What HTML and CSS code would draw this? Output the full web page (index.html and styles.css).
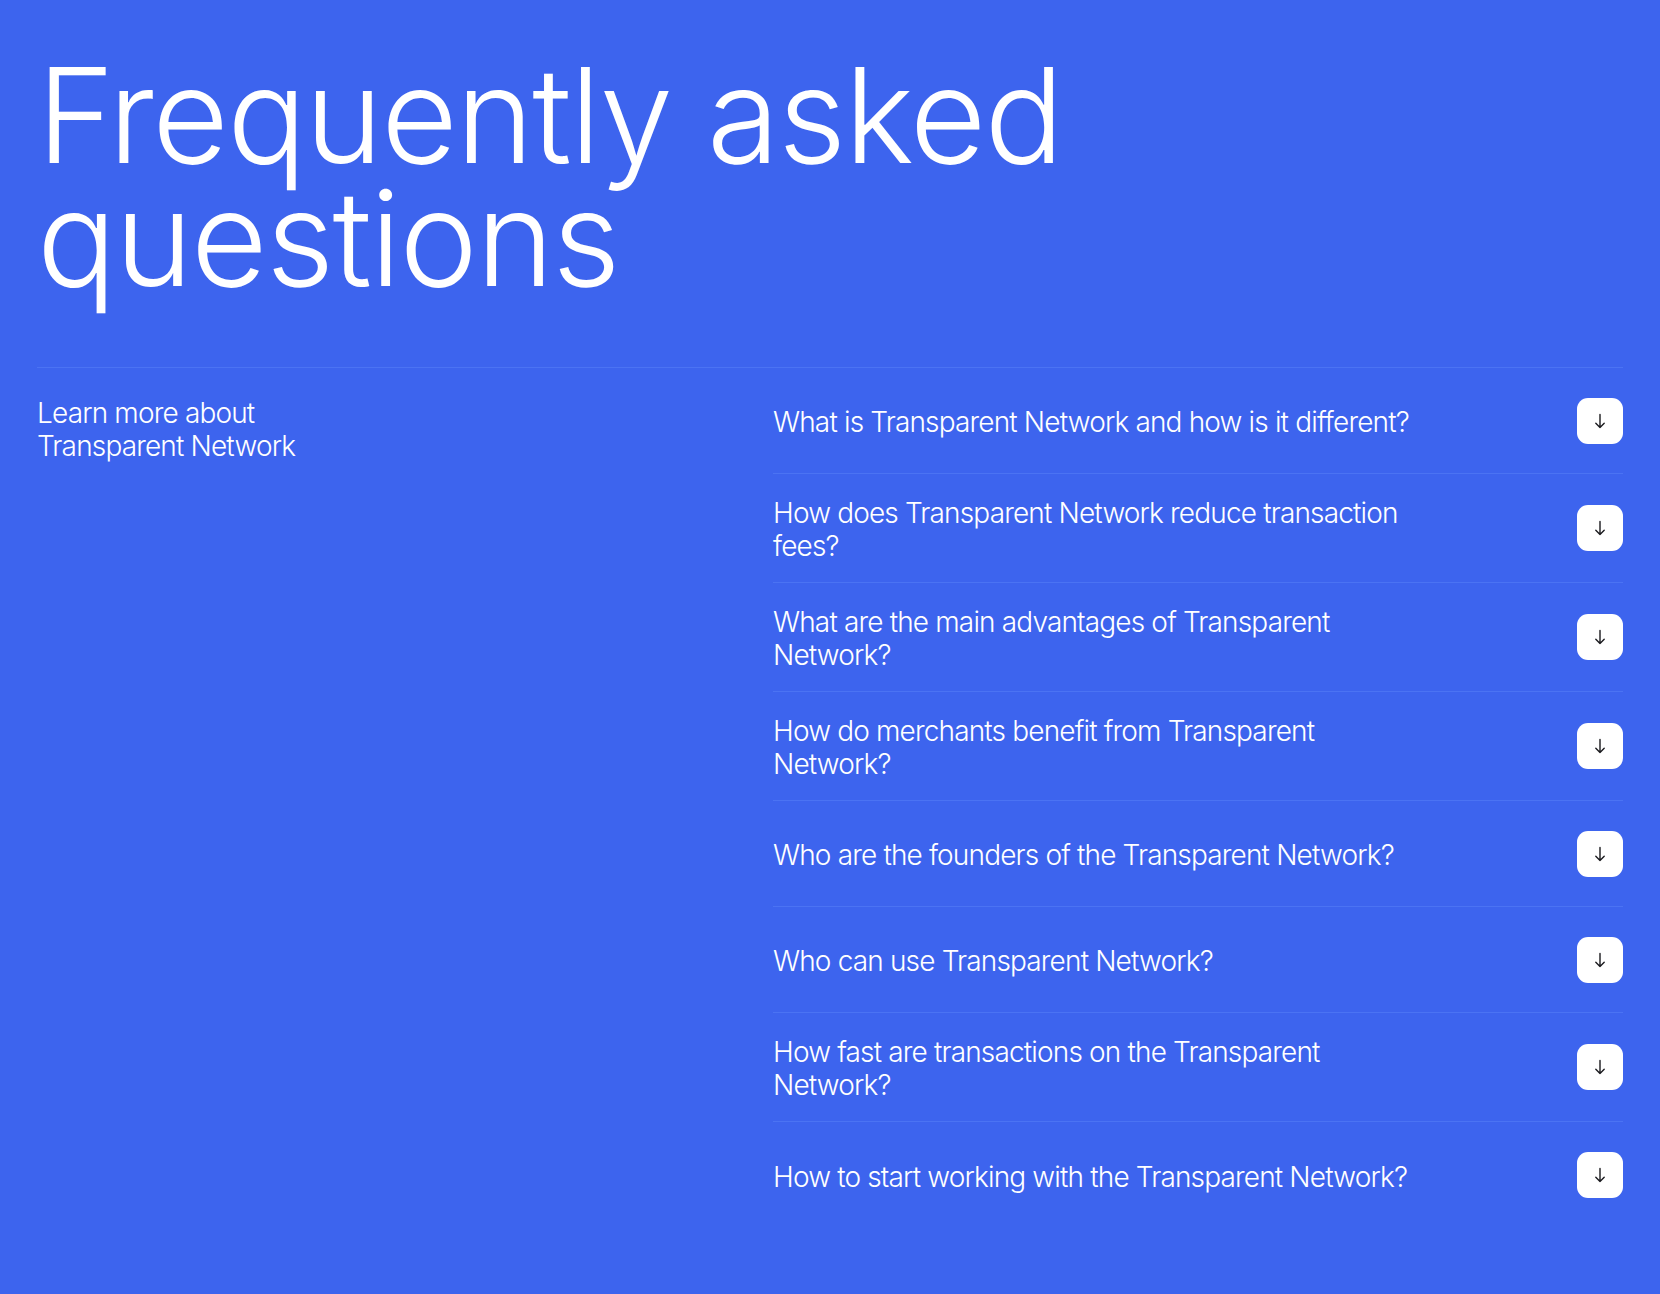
FILE: index.html
```html
<!DOCTYPE html>
<html lang="en">
<head>
<meta charset="utf-8">
<title>FAQ</title>
<link rel="stylesheet" href="styles.css">
</head>
<body>
<main class="page">
  <h1 class="title">Frequently asked<br>questions</h1>
  <section class="faq">
    <p class="intro">Learn more about<br>Transparent Network</p>
    <ul class="list">
      <li class="item"><span class="q">What is Transparent Network and how is it different?</span><button class="btn" aria-label="Expand"><svg viewBox="0 0 12 16" width="12" height="16"><path d="M6 1.5V14.5M1.8 10.3L6 14.5L10.2 10.3"/></svg></button></li>
      <li class="item"><span class="q">How does Transparent Network reduce transaction fees?</span><button class="btn" aria-label="Expand"><svg viewBox="0 0 12 16" width="12" height="16"><path d="M6 1.5V14.5M1.8 10.3L6 14.5L10.2 10.3"/></svg></button></li>
      <li class="item"><span class="q">What are the main advantages of Transparent Network?</span><button class="btn" aria-label="Expand"><svg viewBox="0 0 12 16" width="12" height="16"><path d="M6 1.5V14.5M1.8 10.3L6 14.5L10.2 10.3"/></svg></button></li>
      <li class="item"><span class="q">How do merchants benefit from Transparent Network?</span><button class="btn" aria-label="Expand"><svg viewBox="0 0 12 16" width="12" height="16"><path d="M6 1.5V14.5M1.8 10.3L6 14.5L10.2 10.3"/></svg></button></li>
      <li class="item"><span class="q">Who are the founders of the Transparent Network?</span><button class="btn" aria-label="Expand"><svg viewBox="0 0 12 16" width="12" height="16"><path d="M6 1.5V14.5M1.8 10.3L6 14.5L10.2 10.3"/></svg></button></li>
      <li class="item"><span class="q">Who can use Transparent Network?</span><button class="btn" aria-label="Expand"><svg viewBox="0 0 12 16" width="12" height="16"><path d="M6 1.5V14.5M1.8 10.3L6 14.5L10.2 10.3"/></svg></button></li>
      <li class="item"><span class="q">How fast are transactions on the Transparent Network?</span><button class="btn" aria-label="Expand"><svg viewBox="0 0 12 16" width="12" height="16"><path d="M6 1.5V14.5M1.8 10.3L6 14.5L10.2 10.3"/></svg></button></li>
      <li class="item"><span class="q">How to start working with the Transparent Network?</span><button class="btn" aria-label="Expand"><svg viewBox="0 0 12 16" width="12" height="16"><path d="M6 1.5V14.5M1.8 10.3L6 14.5L10.2 10.3"/></svg></button></li>
    </ul>
  </section>
</main>
</body>
</html>
```
FILE: styles.css
```css
* { box-sizing: border-box; }
html, body {
  margin: 0;
  padding: 0;
  background: #3d64ee;
}
body {
  font-family: Inter, "Noto Sans", sans-serif;
  color: #ffffff;
  min-height: 100vh;
}
.page {
  padding: 54px 37px 67px;
}
.title {
  margin: 0 0 67px;
  font-size: 132px;
  line-height: 123px;
  font-weight: 300;
  letter-spacing: -0.012em;
}
.faq {
  display: grid;
  grid-template-columns: 736px 1fr;
  border-top: 1px solid #4b73f3;
}
.intro {
  margin: 0;
  padding-top: 29px;
  font-size: 28px;
  line-height: 33px;
  font-weight: 300;
  letter-spacing: -0.03em;
}
.list {
  list-style: none;
  margin: 0;
  padding: 0;
}
.item {
  display: flex;
  align-items: center;
  justify-content: space-between;
  min-height: 106px;
  padding: 19px 0;
  border-bottom: 1px solid #4b73f3;
}
.item:last-child {
  border-bottom: none;
}
.q {
  flex: 0 1 650px;
  padding-top: 4px;
  font-size: 28px;
  line-height: 33px;
  font-weight: 300;
  letter-spacing: -0.03em;
}
.btn {
  flex: none;
  width: 46px;
  height: 46px;
  border: none;
  border-radius: 11px;
  background: #ffffff;
  display: flex;
  align-items: center;
  justify-content: center;
  padding: 0;
  cursor: pointer;
}
.btn svg {
  display: block;
  fill: none;
  stroke: #1b1b1f;
  stroke-width: 1.4;
  stroke-linecap: round;
  stroke-linejoin: round;
}
```
